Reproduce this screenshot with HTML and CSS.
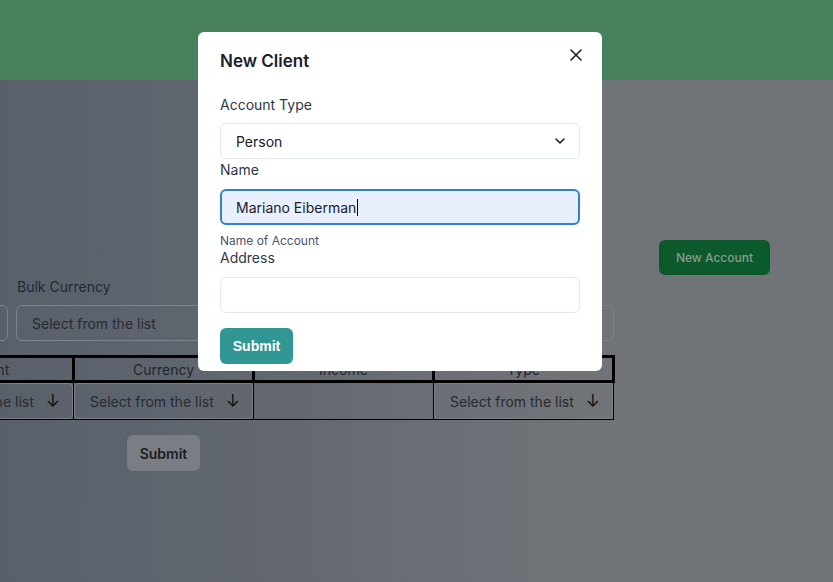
FILE: index.html
```html
<!DOCTYPE html>
<html>
<head>
<meta charset="utf-8">
<link rel="stylesheet" href="styles.css">
</head>
<body>
<header class="topbar"></header>
<main class="page">
  <div class="actions">
    <button class="btn-new">New Account</button>
  </div>
  <div class="bulk">
    <div class="field f1">
      <div class="label">&nbsp;</div>
      <div class="bselect"></div>
    </div>
    <div class="field f2">
      <div class="label">Bulk Currency</div>
      <div class="bselect">Select from the list</div>
    </div>
    <div class="field f3">
      <div class="label">Bulk Type</div>
      <div class="bselect">Select from the list</div>
    </div>
  </div>
  <table class="grid">
    <thead>
      <tr><th>Amount</th><th>Currency</th><th>Income</th><th>Type</th></tr>
    </thead>
    <tbody>
      <tr>
        <td><div class="cselect"><span>Select from the list</span><span class="arrow">&#8595;</span></div></td>
        <td><div class="cselect"><span>Select from the list</span><span class="arrow">&#8595;</span></div></td>
        <td></td>
        <td><div class="cselect"><span>Select from the list</span><span class="arrow">&#8595;</span></div></td>
      </tr>
    </tbody>
  </table>
  <div class="submit-row">
    <button class="btn-gray">Submit</button>
  </div>
</main>

<div class="modal">
  <div class="modal-head">
    <h2 class="title">New Client</h2>
    <button class="close" aria-label="Close">
      <svg width="12" height="12" viewBox="0 0 12 12"><path d="M1 1 L11 11 M11 1 L1 11" stroke="#1a202c" stroke-width="1.6" stroke-linecap="round"/></svg>
    </button>
  </div>
  <div class="modal-body">
    <label class="flabel lab-type">Account Type</label>
    <div class="select">
      <span>Person</span>
      <svg width="10" height="6" viewBox="0 0 10 6"><path d="M1 1 L5 5 L9 1" fill="none" stroke="#1a202c" stroke-width="1.6" stroke-linecap="round" stroke-linejoin="round"/></svg>
    </div>
    <label class="flabel lab-name">Name</label>
    <div class="input focused"><span>Mariano Eiberman</span><span class="caret"></span></div>
    <div class="helper">Name of Account</div>
    <label class="flabel lab-addr">Address</label>
    <div class="input"></div>
    <button class="btn-submit">Submit</button>
  </div>
</div>
</body>
</html>
```

FILE: styles.css
```css
* { box-sizing: border-box; }
html, body { margin: 0; height: 100%; }
body {
  font-family: "Inter", "Noto Sans", sans-serif;
  background: linear-gradient(to right, #59606a 0%, #636870 35%, #6c6f76 55%, #707377 70%, #707377 100%);
  overflow: hidden;
  color: #20262e;
}
.topbar { height: 80px; background: #47805a; }
.page { display: flex; flex-direction: column; }
.actions { display: flex; justify-content: flex-end; padding: 160px 63px 0 0; }
.btn-new {
  width: 111px; height: 35px; border: 0; border-radius: 6px;
  background: #0c5a2c; color: #8a9a8c;
  font-family: "Inter", sans-serif; font-size: 12px; font-weight: 500;
}
.bulk { display: flex; gap: 8px; margin-left: -108px; margin-top: 3px; width: 722px; }
.field { display: flex; flex-direction: column; gap: 10px; }
.f1 { width: 116px; }
.f2 { width: 344px; }
.f3 { width: 246px; }
.label { font-size: 14px; color: #1f2833; height: 17px; line-height: 17px; padding-left: 1px; }
.bselect {
  height: 36px; border: 1px solid #7f8389; border-radius: 6px;
  padding-left: 15px; display: flex; align-items: center;
  font-size: 14px; color: #262b32;
}
.grid {
  border-collapse: collapse; margin-left: -108px; margin-top: 14px;
  table-layout: fixed; width: 721px;
}
.grid th {
  border: 3px solid #000; height: 25px; padding: 0;
  font-size: 14px; font-weight: 400; color: #1f252d; width: 180px;
}
.grid td { border: 1px solid #000; border-top: 0; height: 37px; padding: 0; }
.cselect {
  height: 36px; margin: 0; border: 1px solid #7d8187; border-radius: 4px;
  display: flex; align-items: center; justify-content: space-between;
  padding: 0 12px 0 15px; font-size: 14px; color: #262b32;
}
.arrow { font-size: 17px; color: #111; font-weight: 400; }
.submit-row { padding: 15px 0 0 127px; }
.btn-gray {
  width: 73px; height: 36px; border: 0; border-radius: 6px;
  background: #7a7d83; color: #1a1d22;
  font-family: "Inter", sans-serif; font-size: 14px; font-weight: 600;
}

.modal {
  position: absolute; left: 198px; top: 32px; width: 404px; height: 339px;
  background: #fff; border-radius: 6px;
}
.modal-head { display: flex; justify-content: space-between; align-items: flex-start; padding: 17px 20px 0 22px; }
.title { margin: 0; font-size: 17px; font-weight: 600; color: #1a202c; line-height: 24px; padding-top: 0; }
.close { border: 0; background: none; padding: 0; margin-top: 0; width: 12px; height: 12px; display: flex; }
.modal-body { padding: 23px 22px 0 22px; display: flex; flex-direction: column; }
.flabel { font-size: 14px; color: #2d3748; line-height: 18px; }
.lab-type { margin-bottom: 9px; }
.lab-name { margin-bottom: 10px; margin-top: 2px; }
.lab-addr { margin-bottom: 10px; margin-top: 1px; }
.select {
  height: 36px; border: 1px solid #e2e8f0; border-radius: 6px;
  display: flex; align-items: center; justify-content: space-between;
  padding: 0 14px 0 15px; font-size: 14px; color: #1a202c;
}
.input {
  height: 36px; border: 1px solid #e2e8f0; border-radius: 6px;
  display: flex; align-items: center; padding-left: 15px;
  font-size: 14px; color: #1a202c;
}
.input.focused { background: #e8f0fe; border: 2px solid #3182ce; padding-left: 14px; }
.caret { display: inline-block; width: 1px; height: 17px; background: #000; margin-left: 1px; }
.helper { font-size: 12px; color: #4a5568; margin-top: 9px; line-height: 14px; }
.btn-submit {
  margin-top: 15px; width: 73px; height: 36px; border: 0; border-radius: 6px;
  background: #319795; color: #fff;
  font-family: "Liberation Sans", Arial, sans-serif; font-weight: 700; font-size: 14px;
}
```
